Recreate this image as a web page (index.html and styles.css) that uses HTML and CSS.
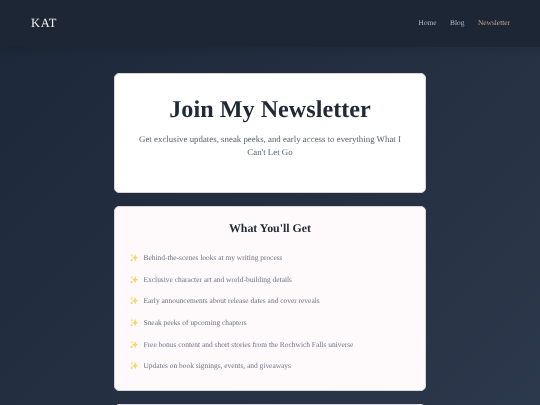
FILE: index.html
```html
<!DOCTYPE html>
<html lang="en">
<head>
<meta charset="utf-8">
<title>Newsletter</title>
<link rel="stylesheet" href="styles.css">
</head>
<body>
<svg class="defs" width="0" height="0" aria-hidden="true">
  <symbol id="sparkle" viewBox="0 0 12 12">
    <path fill="#f9d65c" d="M7.2.8 8.6 4.8 11.8 6.2 8.6 7.6 7.2 11.6 5.8 7.6 2.6 6.2 5.8 4.8Z"/>
    <path fill="#fbdf7e" d="M2.6.4 3.3 2.2 5 2.9 3.3 3.6 2.6 5.4 1.9 3.6.2 2.9 1.9 2.2Z"/>
    <path fill="#f5c94f" d="M2.4 7.4 3 8.9 4.4 9.5 3 10.1 2.4 11.6 1.8 10.1.4 9.5 1.8 8.9Z"/>
  </symbol>
</svg>
<div class="page">
<header class="site-header">
  <div class="logo">KAT</div>
  <nav class="nav">
    <a href="#">Home</a>
    <a href="#">Blog</a>
    <a href="#" class="active">Newsletter</a>
  </nav>
</header>
<main class="main">
  <section class="card hero">
    <h1>Join My Newsletter</h1>
    <p>Get exclusive updates, sneak peeks, and early access to everything What I Can't Let Go</p>
  </section>
  <section class="card benefits">
    <h2>What You'll Get</h2>
    <ul>
      <li><svg class="spark"><use href="#sparkle"/></svg>Behind-the-scenes looks at my writing process</li>
      <li><svg class="spark"><use href="#sparkle"/></svg>Exclusive character art and world-building details</li>
      <li><svg class="spark"><use href="#sparkle"/></svg>Early announcements about release dates and cover reveals</li>
      <li><svg class="spark"><use href="#sparkle"/></svg>Sneak peeks of upcoming chapters</li>
      <li><svg class="spark"><use href="#sparkle"/></svg>Free bonus content and short stories from the Rochwich Falls universe</li>
      <li><svg class="spark"><use href="#sparkle"/></svg>Updates on book signings, events, and giveaways</li>
    </ul>
  </section>
  <section class="card next"></section>
</main>
</div>
</body>
</html>
```
FILE: styles.css
```css
* { box-sizing: border-box; }
html, body { margin: 0; height: 405px; overflow: hidden; }
body {
  font-family: "Liberation Serif", serif;
  text-rendering: geometricPrecision;
  background: linear-gradient(135deg, #1c2738 0%, #2c384b 100%);
}
.defs { position: absolute; }
.page { height: 405px; overflow: hidden; will-change: transform; }
.site-header {
  height: 47px;
  background: #1c2635;
  box-shadow: 0 2px 8px rgba(0,0,0,.12);
  display: flex;
  align-items: center;
  justify-content: space-between;
  padding: 0 30px 2px 31px;
}
.logo { color: #f2f2f0; font-size: 12.5px; letter-spacing: .6px; margin-top: 2px; }
.nav { display: flex; gap: 13.5px; }
.nav a { color: #aeb8c6; font-size: 7.4px; text-decoration: none; }
.nav a.active { color: #c9a58a; }
.main {
  width: 312px;
  margin: 26px auto 0;
  display: flex;
  flex-direction: column;
  gap: 13px;
}
.card {
  flex: none;
  border-radius: 5px;
  border: 1px solid #d8d3d8;
}
.hero {
  background: #fff;
  height: 120px;
  padding: 23px 16px 0;
  text-align: center;
}
.hero h1 { margin: 0; color: #1f2937; font-size: 24.2px; line-height: 26px; font-weight: 700; }
.hero p { margin: 10px 0 0; color: #5b6472; font-size: 8.85px; line-height: 13px; }
.benefits {
  background: #fef9fb;
  height: 185px;
  padding: 14px 14px 0;
}
.benefits h2 { margin: 0; text-align: center; color: #1f2937; font-size: 11.9px; line-height: 15px; font-weight: 700; }
.benefits ul { list-style: none; margin: 11px 0 0; padding: 0; display: flex; flex-direction: column; }
.benefits li {
  display: flex;
  align-items: center;
  height: 21.6px;
  color: #6b7280;
  font-size: 7.45px;
}
.spark { width: 8.5px; height: 9px; margin-right: 5.5px; margin-left: .5px; flex: none; }
.next { background: #fff; height: 40px; }
```
